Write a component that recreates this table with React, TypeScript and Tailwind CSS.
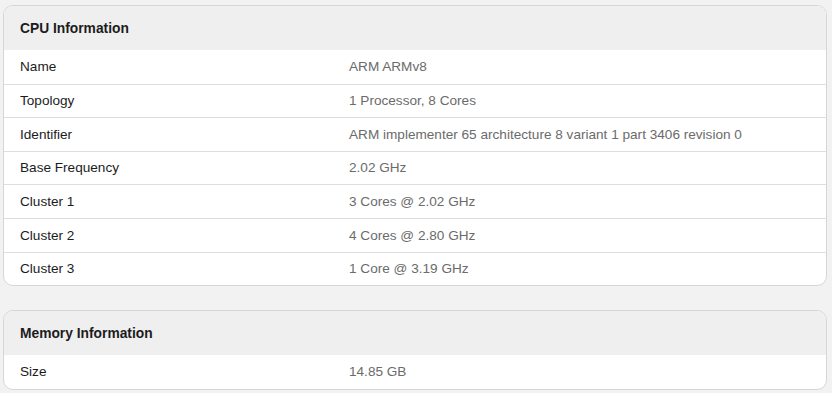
import React from "react";

const cpu: [string, string][] = [
  ["Name", "ARM ARMv8"],
  ["Topology", "1 Processor, 8 Cores"],
  ["Identifier", "ARM implementer 65 architecture 8 variant 1 part 3406 revision 0"],
  ["Base Frequency", "2.02 GHz"],
  ["Cluster 1", "3 Cores @ 2.02 GHz"],
  ["Cluster 2", "4 Cores @ 2.80 GHz"],
  ["Cluster 3", "1 Core @ 3.19 GHz"],
];

const mem: [string, string][] = [["Size", "14.85 GB"]];

function Card({ title, rows }: { title: string; rows: [string, string][] }) {
  return (
    <div className="rounded-[10px] border border-[#d6d6d6] bg-white overflow-hidden">
      <div className="h-[44px] bg-[#efefef] flex items-center pl-[16px] pt-[2px] text-[13.8px] font-bold text-[#1c1c1c]">
        {title}
      </div>
      {rows.map(([k, v], i) => (
        <div
          key={k}
          className={`flex items-center h-[33.6px] pt-[1px] ${i > 0 ? "border-t border-[#dedede]" : ""}`}
        >
          <div className="w-[345px] pl-[16px] text-[13.6px] text-[#1c1c1c]">{k}</div>
          <div className="text-[13.6px] text-[#6b6b6b]">{v}</div>
        </div>
      ))}
    </div>
  );
}

export default function App() {
  return (
    <div
      className="w-[832px] h-[393px] bg-[#f2f2f2] pt-[5px] pl-[3px] pr-[5px] flex flex-col gap-[24px]"
      style={{ fontFamily: '"Liberation Sans", Arial, sans-serif' }}
    >
      <Card title="CPU Information" rows={cpu} />
      <Card title="Memory Information" rows={mem} />
    </div>
  );
}
